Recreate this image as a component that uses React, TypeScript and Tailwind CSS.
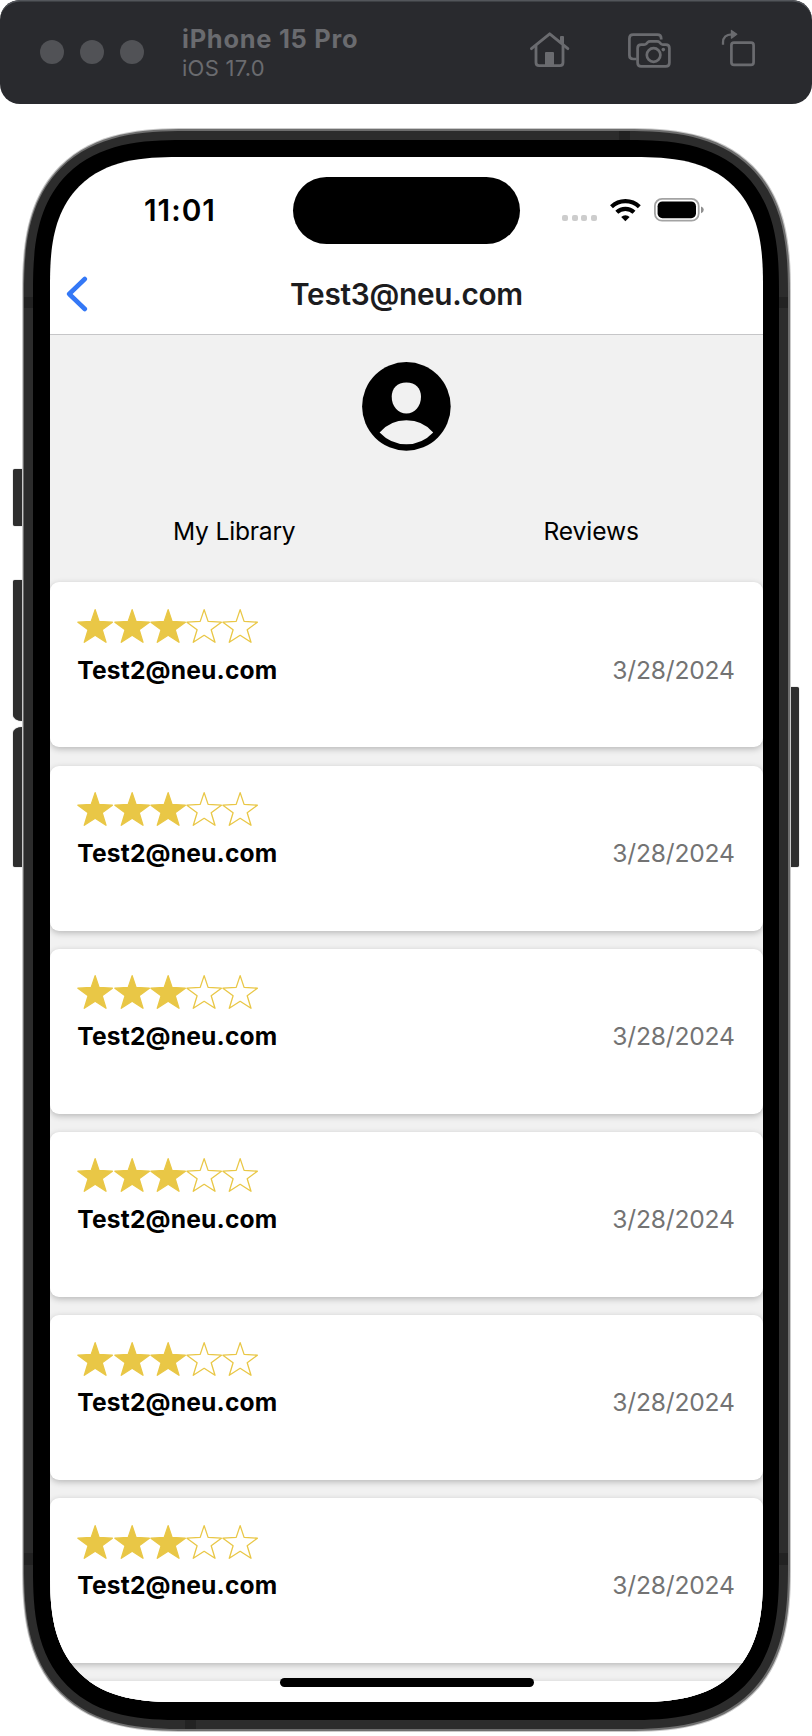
import { type ReactNode } from "react";

type Review = { id: number; rating: number; author: string; date: string };

const reviews: Review[] = Array.from({ length: 6 }, (_, id) => ({
  id,
  rating: 3,
  author: "Test2@neu.com",
  date: "3/28/2024",
}));

function HomeIcon() {
  return (
    <svg width="48" height="44" viewBox="526 28 48 44" fill="none" stroke="#6a6b6f" strokeWidth="2.8" strokeLinecap="round" strokeLinejoin="round">
      <path d="M531.4 48.7 L549.7 33.8 L567.9 48.7" />
      <path d="M536 46 V62.6 Q536 65.7 539.1 65.7 H559.9 Q563 65.7 563 62.6 V46" />
      <path d="M545 66 V53 Q545 52 546 52 H553 Q554 52 554 53 V66 Z" fill="#6a6b6f" stroke="none" />
      <path d="M560 41.5 V37 Q560 36 561 36 H563 Q564 36 564 37 V45 Z" fill="#6a6b6f" stroke="none" />
    </svg>
  );
}

function ScreenshotIcon() {
  return (
    <svg width="50" height="44" viewBox="624 28 50 44" fill="none" stroke="#6a6b6f" strokeWidth="2.7" strokeLinecap="butt" strokeLinejoin="round">
      <path d="M661.2 39.4 V38.5 Q661.2 34.7 657.4 34.7 H633.2 Q629.4 34.7 629.4 38.5 V55.2 Q629.4 59 633.2 59 H636.4" />
      <path d="M641 44.6 H644.2 Q645.6 44.6 646.5 43.6 L647.6 42.4 Q648.6 41.4 650 41.4 H657.2 Q658.6 41.4 659.6 42.4 L660.7 43.6 Q661.6 44.6 663 44.6 H665.8 Q669.4 44.6 669.4 48.2 V62.8 Q669.4 66.4 665.8 66.4 H641.2 Q637.6 66.4 637.6 62.8 V48.2 Q637.6 44.6 641.2 44.6 Z" />
      <circle cx="653.6" cy="55" r="6.8" />
      <circle cx="663.3" cy="49.6" r="1.8" fill="#6a6b6f" stroke="none" />
    </svg>
  );
}

function RotateIcon() {
  return (
    <svg width="40" height="44" viewBox="718 28 40 44" fill="none" stroke="#6a6b6f" strokeWidth="2.7">
      <rect x="731.4" y="42.7" width="22.2" height="22.2" rx="2.6" />
      <path d="M723 44.8 V42.5 Q723 34.5 732 34.3" strokeWidth="2.3" />
      <path d="M731.4 30.4 L736.8 34.3 L731.4 38.2 Z" fill="#6a6b6f" strokeWidth="1.2" strokeLinejoin="round" />
    </svg>
  );
}

function SimulatorBar() {
  return (
    <header className="flex h-[104px] shrink-0 rounded-[20px] bg-[#292a2e] pl-10 pr-[54px] shadow-[inset_0_2px_0_-0.5px_#53565b]">
      <div className="flex items-center gap-4">
        <span className="size-6 rounded-full bg-[#515256]" />
        <span className="size-6 rounded-full bg-[#515256]" />
        <span className="size-6 rounded-full bg-[#515256]" />
      </div>
      <div className="ml-[38px] whitespace-nowrap pt-6 text-[#6a6b6f]">
        <div className="text-[25.4px] font-bold leading-[29px] tracking-[0.75px]">iPhone 15 Pro</div>
        <div className="mt-px text-[22px] leading-[29px] tracking-[0.26px]">iOS 17.0</div>
      </div>
      <div className="ml-auto flex pt-7">
        <HomeIcon />
        <div className="ml-[50px]">
          <ScreenshotIcon />
        </div>
        <div className="ml-11">
          <RotateIcon />
        </div>
      </div>
    </header>
  );
}

function WifiIcon() {
  return (
    <svg width="32" height="24" viewBox="609 198 32 24" fill="none" stroke="#000" strokeWidth="4.2">
      <path d="M611.5 206.8 A20 20 0 0 1 639.3 206.8" />
      <path d="M616.8 212.3 A12.4 12.4 0 0 1 634 212.3" />
      <path d="M625.4 221.2 L621.2 217 A6 6 0 0 1 629.6 217 Z" fill="#000" stroke="none" />
    </svg>
  );
}

function BatteryIcon() {
  return (
    <svg width="51" height="24" viewBox="654 198 51 24">
      <rect x="654.9" y="198.9" width="43.8" height="21.8" rx="7.2" fill="none" stroke="#a3a3a3" strokeWidth="1.8" />
      <rect x="657.6" y="201.4" width="38.4" height="16.8" rx="4.8" />
      <path d="M701 206.4 Q703.8 207.4 703.8 209.8 T701 213.2 Z" fill="#8f8f8f" />
    </svg>
  );
}

function StatusBar() {
  return (
    <div className="mt-5 grid h-[67px] grid-cols-[149px_227px_1fr] items-center pl-[94px] pr-[58px]">
      <span className="text-[29.8px] font-semibold leading-9 tracking-[1px]">11:01</span>
      <div className="h-[67px] rounded-full bg-black" />
      <div className="flex items-center justify-end">
        <div className="mt-[15px] flex gap-[3.6px] pr-3">
          {[0, 1, 2, 3].map((dot) => (
            <span key={dot} className="size-[6px] rounded-[2px] bg-[#cdcdcd]" />
          ))}
        </div>
        <WifiIcon />
        <div className="ml-[13px]">
          <BatteryIcon />
        </div>
      </div>
    </div>
  );
}

function NavBar() {
  return (
    <nav className="mt-[10px] grid h-[81px] grid-cols-[60px_1fr_60px] items-center border-b border-[#c6c6c8]">
      <svg className="ml-4" width="24" height="38" viewBox="66 275 24 38" fill="none" stroke="#3478f6" strokeWidth="4.6" strokeLinecap="round" strokeLinejoin="round">
        <path d="M84.8 279 L69.2 294 L84.8 309" />
      </svg>
      <h1 className="text-center text-[29.8px] font-semibold leading-9 tracking-[-0.28px] text-[#1c1c1e]">Test3@neu.com</h1>
    </nav>
  );
}

function Avatar() {
  return (
    <svg width="89" height="89" viewBox="362 362 89 89">
      <circle cx="406.4" cy="406.4" r="44.3" />
      <path
        fill="#f1f1f1"
        d="M406.4 382.6 C415.6 382.6 421 388.6 421 396.8 C421 406.3 414.6 413.6 406.4 413.6 C398.2 413.6 391.7 406.3 391.7 396.8 C391.7 388.6 397.2 382.6 406.4 382.6 Z"
      />
      <path fill="#f1f1f1" d="M379.6 432.4 Q390 420.2 406.4 420.2 T433.2 432.4 Q422 444.2 406.4 444.2 T379.6 432.4 Z" />
    </svg>
  );
}

function Star({ filled }: { filled: boolean }) {
  return (
    <svg width="36.3" height="36.3" viewBox="0 0 36.3 36.3" className="shrink-0">
      <path
        d="M18.15 1.6 L22.1 13.4 L35.4 14.2 L25.2 21.8 L29 34.3 L18.15 27.3 L7.3 34.3 L11.1 21.8 L0.9 14.2 L14.2 13.4 Z"
        fill={filled ? "#e9c746" : "none"}
        stroke="#e9c746"
        strokeWidth={1.3}
        strokeLinejoin="round"
      />
    </svg>
  );
}

function Card({ children }: { children?: ReactNode }) {
  return (
    <li className="h-[165px] shrink-0 rounded-[9px] bg-white pl-[27.3px] pr-[28.3px] pt-[25.6px] shadow-[0_2px_6px_rgba(0,0,0,0.24)]">
      {children}
    </li>
  );
}

function ReviewCard({ review }: { review: Review }) {
  return (
    <Card>
      <div className="flex">
        {[1, 2, 3, 4, 5].map((n) => (
          <Star key={n} filled={n <= review.rating} />
        ))}
      </div>
      <div className="mt-[10.3px] flex justify-between text-[24.6px] leading-[30px]">
        <span className="font-bold tracking-[0.17px]">{review.author}</span>
        <span className="tracking-[-0.2px] text-[#737373]">{review.date}</span>
      </div>
    </Card>
  );
}

function PhoneFrame({ children }: { children: ReactNode }) {
  return (
    <div className="relative rounded-[165px] bg-[#c9c9c9] p-px [corner-shape:superellipse(1.415)]">
      <div className="rounded-[164px] bg-[#6e6e6e] p-[1.5px] [corner-shape:superellipse(1.415)]">
        <div className="rounded-[162px] bg-[#2c2c2c] p-[9px] pb-[9.5px] [corner-shape:superellipse(1.415)]">
          <div className="rounded-[150px] bg-black pb-[18px] pl-[17px] pr-[16.3px] pt-[17px] [corner-shape:superellipse(1.415)]">
            {children}
          </div>
        </div>
      </div>
      <span className="absolute left-[597px] top-[2.5px] h-[9px] w-[11px] bg-[#222222]" />
      <span className="absolute bottom-[2.5px] left-[163px] h-[9px] w-[11px] bg-[#222222]" />
      <span className="absolute left-[2.5px] top-[169px] h-[11px] w-[9px] bg-[#222222]" />
      <span className="absolute right-[2.5px] top-[169px] h-[11px] w-[9px] bg-[#222222]" />
      <span className="absolute bottom-[167px] left-[2.5px] h-[12px] w-[9px] bg-[#222222]" />
      <span className="absolute bottom-[167px] right-[2.5px] h-[12px] w-[9px] bg-[#222222]" />
    </div>
  );
}

export default function App() {
  return (
    <div className="flex h-[1736px] w-[812px] flex-col overflow-hidden bg-white font-[Inter,sans-serif] text-black">
      <SimulatorBar />
      <div className="mt-[24px] flex pl-[12.5px]">
        <div className="flex w-[9px] flex-col pt-[341px]">
          <span className="h-[57px] rounded-l-[2px] bg-[#2e2e2e] shadow-[0_0_1px_#555]" />
          <span className="mt-[54px] h-[141px] rounded-bl-[9px_6px] rounded-tl-[2px] bg-[#2e2e2e] shadow-[0_0_1px_#555]" />
          <span className="mt-[6px] h-[140px] rounded-bl-[2px] rounded-tl-[9px_6px] bg-[#2e2e2e] shadow-[0_0_1px_#555]" />
        </div>
        <PhoneFrame>
          <main className="relative flex h-[1545px] w-[713px] flex-col overflow-hidden rounded-[128px] bg-white [corner-shape:superellipse(1.415)]">
            <StatusBar />
            <NavBar />
            <section className="flex flex-1 flex-col bg-[#f1f1f1] pt-[27.4px]">
              <div className="flex justify-center">
                <Avatar />
              </div>
              <div className="mt-[65.4px] flex justify-around text-[24.6px] leading-[30px]">
                <span className="-ml-px tracking-[-0.2px]">My Library</span>
                <span className="tracking-[-0.07px]">Reviews</span>
              </div>
              <ul className="mt-[36.2px] flex h-0 flex-col gap-[18.15px]">
                {reviews.map((review) => (
                  <ReviewCard key={review.id} review={review} />
                ))}
                <Card />
              </ul>
            </section>
            <span className="absolute bottom-[15px] left-[230px] h-[9px] w-[254px] rounded-full bg-black" />
          </main>
        </PhoneFrame>
        <div className="flex w-[8px] flex-col pt-[559px]">
          <span className="h-[180px] rounded-r-[2px] bg-[#2e2e2e] shadow-[0_0_1px_#555]" />
        </div>
      </div>
    </div>
  );
}
